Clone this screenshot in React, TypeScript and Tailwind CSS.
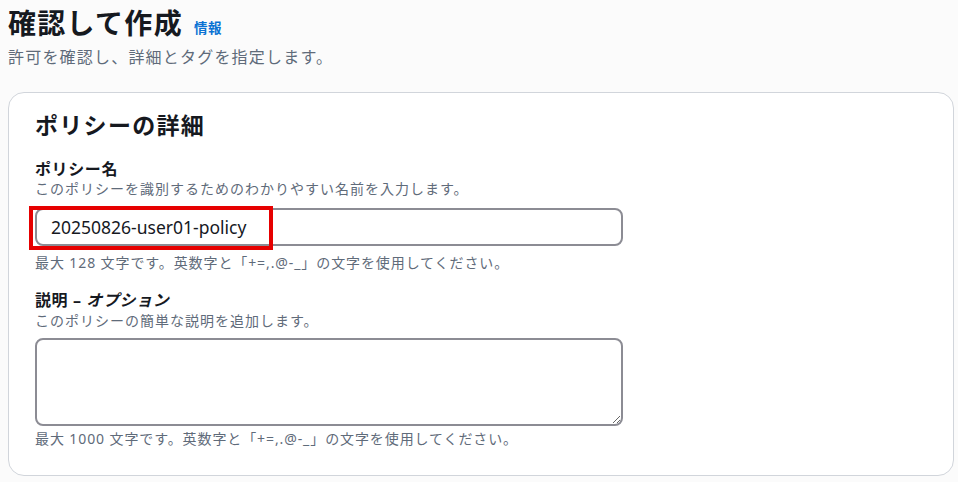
export default function App() {
  return (
    <div
      className="w-[958px] h-[482px] bg-[#fbfbfb] px-2 pt-[4px] text-[#16191f] overflow-hidden"
      style={{ fontFamily: '"Noto Sans", "Noto Sans CJK JP", sans-serif' }}
    >
      <div className="flex items-end gap-[11px]">
        <h1 className="text-[28px] font-bold leading-[38px] tracking-[1.3px]">確認して作成</h1>
        <a className="text-[13.5px] font-bold text-[#0972d3] leading-[28px] tracking-[0.5px]">情報</a>
      </div>
      <p className="text-[16px] text-[#5f6b7a] leading-[24px] mt-[3px] tracking-[1.2px]">
        許可を確認し、詳細とタグを指定します。
      </p>

      <div className="mt-[23px] w-[946px] h-[384px] rounded-[16px] border border-[#d1d5db] bg-white px-[26px] pt-[16px]">
        <h2 className="text-[23px] font-bold leading-[32px] tracking-[1.3px]">ポリシーの詳細</h2>

        <div className="mt-[17px]">
          <div className="text-[16px] font-bold leading-[22px] tracking-[0.6px]">ポリシー名</div>
          <div className="text-[14px] text-[#5f6b7a] leading-[18px] tracking-[1px]">
            このポリシーを識別するためのわかりやすい名前を入力します。
          </div>
          <div className="relative mt-[10px] w-[588px] h-[38px] rounded-[8px] border-2 border-[#8c8c94] bg-white flex items-center pl-[14px] text-[17.5px]">
            20250826-user01-policy
            <div className="absolute left-[-8px] top-[-4px] w-[244px] h-[44px] border-[4px] border-[#e60000]" />
          </div>
          <div className="text-[14px] text-[#5f6b7a] leading-[18px] mt-[8px] tracking-[0.9px]">
            最大 128 文字です。英数字と「+=,.@-_」の文字を使用してください。
          </div>
        </div>

        <div className="mt-[17px]">
          <div className="text-[16px] font-bold leading-[22px] tracking-[0.6px]">
            説明 – <span className="italic">オプション</span>
          </div>
          <div className="text-[14px] text-[#5f6b7a] leading-[18px] mt-[1px] tracking-[1px]">
            このポリシーの簡単な説明を追加します。
          </div>
          <textarea className="block mt-[8px] w-[588px] h-[88px] rounded-[8px] border-2 border-[#8c8c94] bg-white resize-y" />
          <div className="text-[14px] text-[#5f6b7a] leading-[18px] mt-[4px] tracking-[0.9px]">
            最大 1000 文字です。英数字と「+=,.@-_」の文字を使用してください。
          </div>
        </div>
      </div>
    </div>
  );
}
